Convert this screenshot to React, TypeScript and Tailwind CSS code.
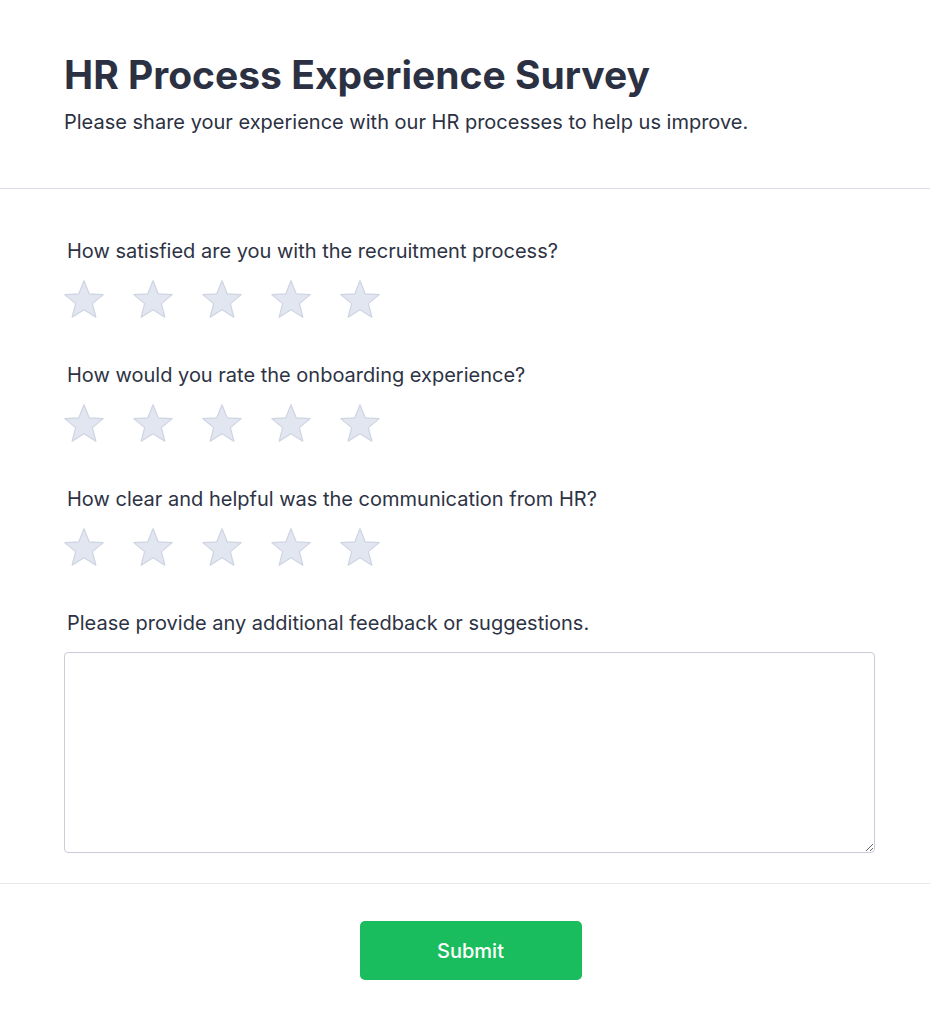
import React from 'react';

const questions = [
  'How satisfied are you with the recruitment process?',
  'How would you rate the onboarding experience?',
  'How clear and helpful was the communication from HR?',
];

function starPoints(cx: number, cy: number, outer: number, inner: number) {
  const pts: string[] = [];
  for (let i = 0; i < 10; i++) {
    const r = i % 2 === 0 ? outer : inner;
    const a = (Math.PI / 5) * i - Math.PI / 2;
    pts.push(`${(cx + r * Math.cos(a)).toFixed(2)},${(cy + r * Math.sin(a)).toFixed(2)}`);
  }
  return pts.join(' ');
}

function Star() {
  return (
    <svg width="42" height="42" viewBox="0 0 42 42" className="block shrink-0">
      <polygon
        points={starPoints(21, 21.9, 20.2, 8.8)}
        fill="#e2e6f0"
        stroke="#cfd4e2"
        strokeWidth="1.2"
        strokeLinejoin="round"
      />
    </svg>
  );
}

function StarRow() {
  return (
    <div className="flex items-center gap-[27px] mt-[14px] -ml-[1.5px]">
      {[0, 1, 2, 3, 4].map((i) => (
        <button key={i} type="button" className="p-0">
          <Star />
        </button>
      ))}
    </div>
  );
}

export default function App() {
  return (
    <div className="min-h-screen bg-white font-['Inter','Noto_Sans',sans-serif] text-[#2d3344]">
      <header className="px-16 pt-[55px] pb-[52px] border-b border-[#dcdfeb]">
        <h1 className="text-[39px] leading-[40px] font-bold text-[#2b3142]">
          HR Process Experience Survey
        </h1>
        <p className="mt-[13px] text-[20px] leading-[28px] text-[#2b3142]">
          Please share your experience with our HR processes to help us improve.
        </p>
      </header>

      <form className="pl-16 pr-[55px] pt-[48px] pb-[30px] border-b border-[#e6e8ee]">
        <div className="flex flex-col gap-[40px]">
          {questions.map((q) => (
            <div key={q}>
              <label className="block ml-[3px] text-[20px] leading-[28px] text-[#2d3344]">
                {q}
              </label>
              <StarRow />
            </div>
          ))}
          <div>
            <label className="block ml-[3px] text-[20px] leading-[28px] text-[#2d3344]">
              Please provide any additional feedback or suggestions.
            </label>
            <textarea className="block mt-[15px] w-full h-[201px] rounded border border-[#c9ccd9] p-3 text-[16px] outline-none resize-y" />
          </div>
        </div>
      </form>

      <div className="pl-[66px] pr-[55px] pt-[37px] flex justify-center">
        <button
          type="button"
          className="w-[222px] h-[59px] rounded-[5px] bg-[#1abd5d] text-white text-[20px] font-medium"
        >
          Submit
        </button>
      </div>
    </div>
  );
}
